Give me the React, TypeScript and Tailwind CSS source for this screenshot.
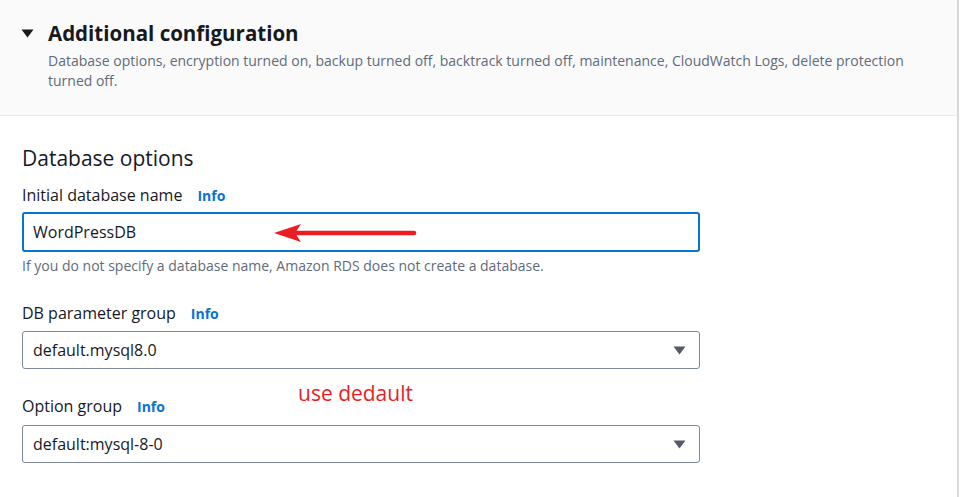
import React from 'react';

const font = { fontFamily: '"Open Sans", "Noto Sans", sans-serif' };

function Caret({ className }: { className?: string }) {
  return (
    <svg width="13" height="9" viewBox="0 0 13 9" className={className}>
      <path d="M0.5 0.5 L12.5 0.5 L6.5 8.5 Z" fill="currentColor" />
    </svg>
  );
}

function Label({ text }: { text: string }) {
  return (
    <div className="flex items-baseline h-[24px]">
      <span className="text-[16px] leading-[24px] text-[#16191f]">{text}</span>
      <span className="ml-[15px] text-[14px] font-bold text-[#0972d3]">Info</span>
    </div>
  );
}

function Select({ value }: { value: string }) {
  return (
    <div className="w-[678px] h-[38px] border border-[#7d8998] rounded-[3px] flex items-center justify-between pl-[10px] pr-[13px]">
      <span className="text-[16px] text-[#16191f]">{value}</span>
      <Caret className="text-[#545b64]" />
    </div>
  );
}

export default function App() {
  return (
    <div className="w-[961px] h-[497px] bg-white overflow-hidden" style={font}>
      <div className="w-[959px] h-full border-r-2 border-[#d5dbdb] relative">
        {/* header */}
        <div className="h-[116px] bg-[#fafafa] border-b border-[#e9ebed] pt-[21px] pl-[21px]">
          <div className="flex items-center h-[24px]">
            <Caret className="text-[#16191f]" />
            <span className="ml-[14px] text-[20.5px] font-bold text-[#16191f] leading-[24px]">
              Additional configuration
            </span>
          </div>
          <p className="ml-[27px] mt-[6px] w-[870px] text-[14px] leading-[20px] text-[#5f6b7a]">
            Database options, encryption turned on, backup turned off, backtrack turned off, maintenance, CloudWatch Logs, delete protection turned off.
          </p>
        </div>

        {/* body */}
        <div className="pl-[22px] pt-[29px]">
          <h2 className="text-[21px] leading-[26px] text-[#16191f]">Database options</h2>

          <div className="mt-[12px]">
            <Label text="Initial database name" />
            <div className="mt-[5px] w-[678px] h-[40px] border-2 border-[#0972d3] rounded-[3px] flex items-center pl-[9px]">
              <span className="text-[16px] text-[#16191f]">WordPressDB</span>
            </div>
            <p className="mt-[4px] text-[14px] leading-[20px] text-[#5f6b7a]">
              If you do not specify a database name, Amazon RDS does not create a database.
            </p>
          </div>

          <div className="mt-[25px]">
            <Label text="DB parameter group" />
            <div className="mt-[6px]">
              <Select value="default.mysql8.0" />
            </div>
          </div>

          <div className="mt-[25px]">
            <Label text="Option group" />
            <div className="mt-[7px]">
              <Select value="default:mysql-8-0" />
            </div>
          </div>
        </div>

        {/* annotations */}
        <svg className="absolute left-[272px] top-[222px]" width="148" height="22" viewBox="0 0 148 22">
          <line x1="22" y1="11" x2="142" y2="11" stroke="#ec1c24" strokeWidth="4.5" strokeLinecap="round" />
          <path d="M2 11 L29 2 L23 11 L29 20 Z" fill="#ec1c24" />
        </svg>
        <span className="absolute left-[298px] top-[379px] text-[21px] leading-[28px] text-[#ec1c24]">
          use dedault
        </span>
      </div>
    </div>
  );
}
